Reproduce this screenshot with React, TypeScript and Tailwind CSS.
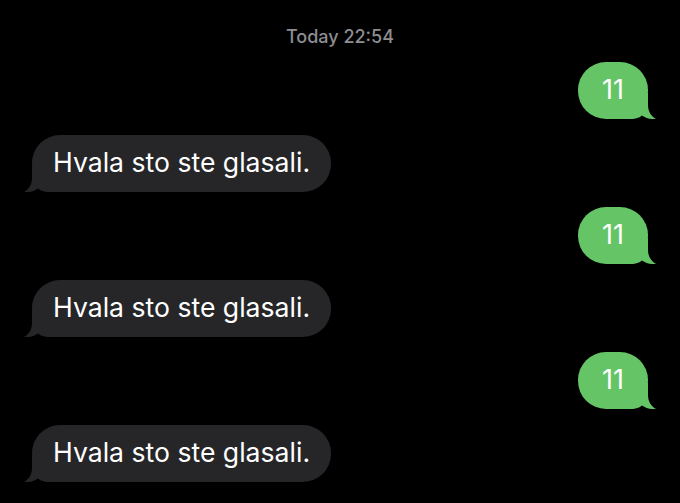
const messages = [
  { from: "me", text: "11" },
  { from: "them", text: "Hvala sto ste glasali." },
  { from: "me", text: "11" },
  { from: "them", text: "Hvala sto ste glasali." },
  { from: "me", text: "11" },
  { from: "them", text: "Hvala sto ste glasali." },
];

function Tail({ color, side }: { color: string; side: "left" | "right" }) {
  return (
    <svg
      width="36"
      height="26"
      viewBox="0 0 36 26"
      className={side === "left" ? "absolute bottom-0 left-[-8px]" : "absolute bottom-0 right-[-8px] -scale-x-100"}
    >
      <path
        d="M8 0 L8 12 C8 19 4.5 23.5 0 26 C5.5 26.4 10.5 25 14 22.4 C17 25 21 26 27 26 L36 26 L36 0 Z"
        fill={color}
      />
    </svg>
  );
}

function Bubble({ from, text }: { from: string; text: string }) {
  if (from === "me") {
    return (
      <div className="flex justify-end">
        <div className="relative flex h-[57px] w-[70px] items-center justify-center rounded-[28px] bg-[#65c466] text-[27px] text-white">
          <Tail color="#65c466" side="right" />
          <span className="relative">{text}</span>
        </div>
      </div>
    );
  }
  return (
    <div className="flex justify-start">
      <div className="relative flex h-[57px] items-center rounded-[28px] bg-[#262628] px-[21px] text-[26.6px] text-white">
        <Tail color="#262628" side="left" />
        <span className="relative">{text}</span>
      </div>
    </div>
  );
}

export default function App() {
  return (
    <div
      className="h-[503px] w-[680px] overflow-hidden bg-black px-8 pt-[26px]"
      style={{ fontFamily: "Inter, 'Noto Sans', sans-serif" }}
    >
      <p className="text-center text-[18px] leading-[22px] font-medium text-[#8e8e93]">
        Today 22:54
      </p>
      <div className="mt-[14px] flex flex-col gap-[15.5px]">
        {messages.map((m, i) => (
          <Bubble key={i} from={m.from} text={m.text} />
        ))}
      </div>
    </div>
  );
}
